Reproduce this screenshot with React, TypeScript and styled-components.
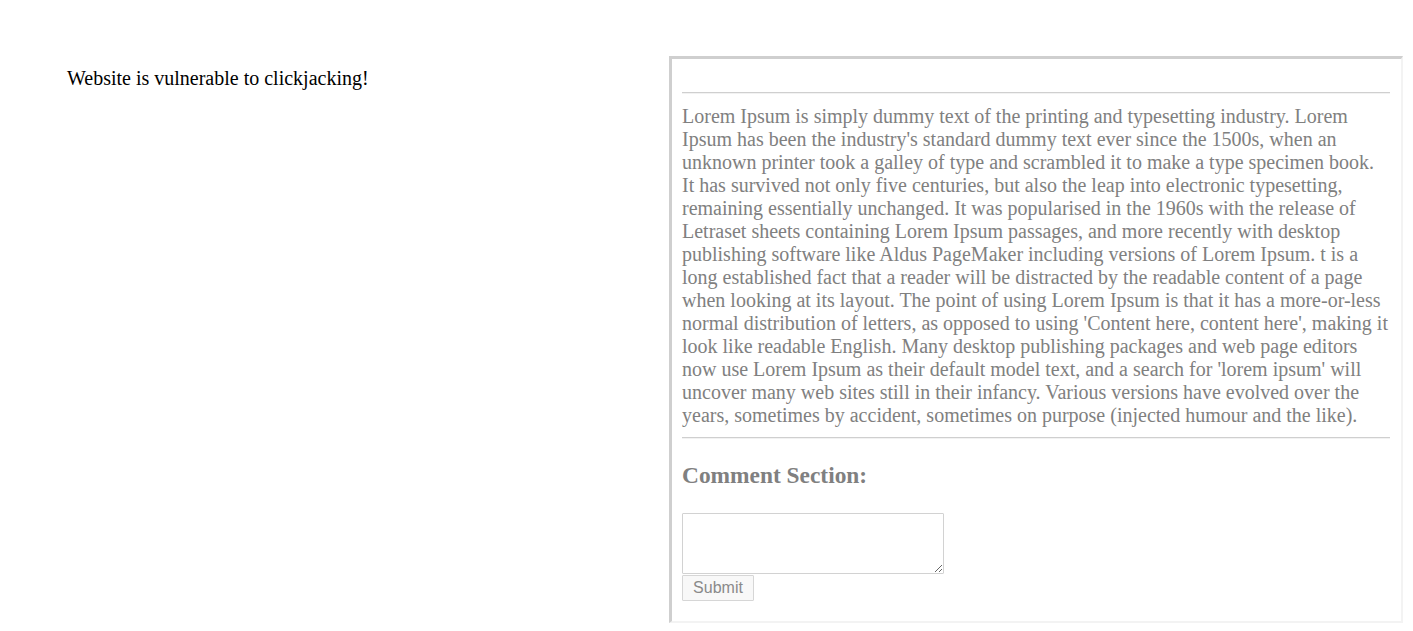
import React from "react";
import styled, { createGlobalStyle } from "styled-components";

const Global = createGlobalStyle`
  html, body { margin: 0; padding: 0; background: #ffffff; }
  body { font-family: "Liberation Serif", "Times New Roman", serif; color: #000; }
`;

const Page = styled.div`
  display: flex;
  align-items: flex-start;
  padding-top: 56px;
  width: 1413px;
  height: 631px;
  box-sizing: border-box;
`;

const Left = styled.div`
  width: 669px;
  flex: none;
  box-sizing: border-box;
  padding: 12px 0 0 67px;
  font-size: 20px;
  line-height: 20px;
  font-family: "Liberation Serif", serif;
  color: #000;
`;

const Frame = styled.div`
  width: 734px;
  height: 567px;
  flex: none;
  box-sizing: border-box;
  border-style: solid;
  border-width: 3px 2px 2px 3px;
  border-color: #cfcfcf #f3f3f3 #f3f3f3 #cfcfcf;
  padding: 33px 11px 0 10px;
  overflow: hidden;
  color: #808080;
  font-family: "Liberation Serif", serif;
  font-size: 20px;
`;

const Rule = styled.div`
  height: 0;
  border-top: 1px solid #cfcfcf;
  border-bottom: 1px solid #f2f2f2;
`;

const Text = styled.p`
  margin: 11px 0 10px;
  font-size: 20px;
  line-height: 23px;
`;

const Heading = styled.h3`
  margin: 23px 0 24px;
  font-size: 23.4px;
  line-height: 27px;
  font-weight: bold;
  color: #808080;
`;

const Form = styled.div`
  display: flex;
  flex-direction: column;
  align-items: flex-start;
  gap: 1px;
`;

const Area = styled.textarea`
  width: 262px;
  height: 61px;
  box-sizing: border-box;
  border: 1px solid #d2d2d2;
  border-radius: 1px;
  margin: 0;
  padding: 2px;
  background: #fff;
  font-family: "Liberation Mono", monospace;
  font-size: 13px;
`;

const Button = styled.button`
  height: 26px;
  width: 72px;
  box-sizing: border-box;
  border: 1px solid #d6d6d6;
  border-radius: 1px;
  background: #f8f8f8;
  color: #8a8a8a;
  font-family: "Liberation Sans", Arial, sans-serif;
  font-size: 16px;
  padding: 0;
  margin: 0;
`;

export default function App() {
  return (
    <>
      <Global />
      <Page>
        <Left>Website is vulnerable to clickjacking!</Left>
        <Frame>
          <Rule />
          <Text>
            Lorem Ipsum is simply dummy text of the printing and typesetting industry. Lorem Ipsum has been the
            industry's standard dummy text ever since the 1500s, when an unknown printer took a galley of type and
            scrambled it to make a type specimen book. It has survived not only five centuries, but also the leap
            into electronic typesetting, remaining essentially unchanged. It was popularised in the 1960s with the
            release of Letraset sheets containing Lorem Ipsum passages, and more recently with desktop publishing
            software like Aldus PageMaker including versions of Lorem Ipsum. t is a long established fact that a
            reader will be distracted by the readable content of a page when looking at its layout. The point of
            using Lorem Ipsum is that it has a more-or-less normal distribution of letters, as opposed to using
            'Content here, content here', making it look like readable English. Many desktop publishing packages and
            web page editors now use Lorem Ipsum as their default model text, and a search for 'lorem ipsum' will
            uncover many web sites still in their infancy. Various versions have evolved over the years, sometimes
            by accident, sometimes on purpose (injected humour and the like).
          </Text>
          <Rule />
          <Heading>Comment Section:</Heading>
          <Form>
            <Area />
            <Button type="button">Submit</Button>
          </Form>
        </Frame>
      </Page>
    </>
  );
}
